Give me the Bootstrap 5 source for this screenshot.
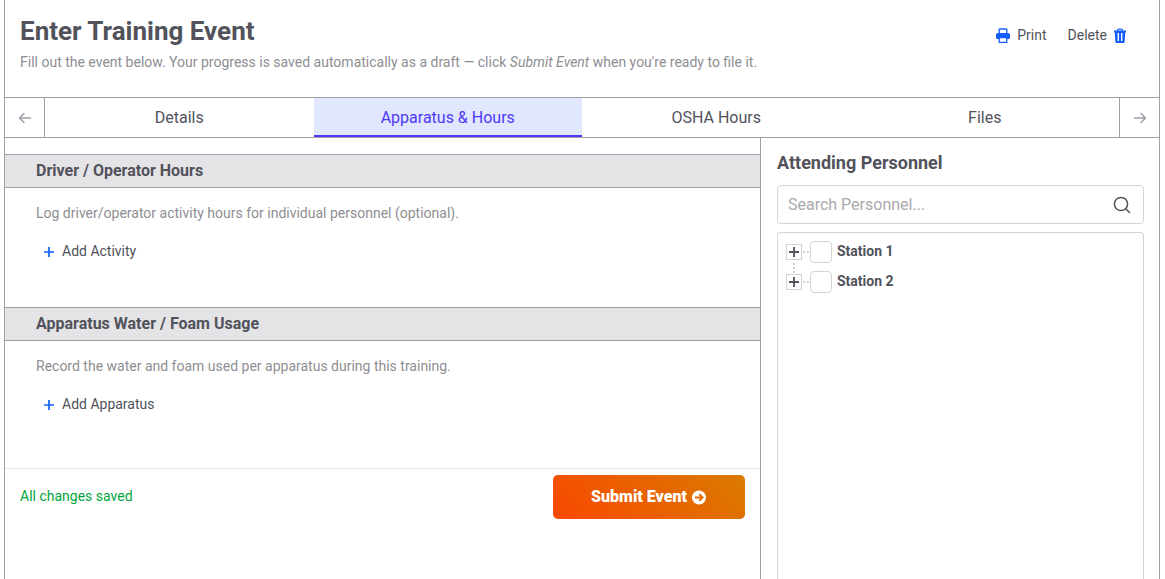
<!DOCTYPE html>
<html lang="en">
<head>
<meta charset="utf-8">
<meta name="viewport" content="width=device-width, initial-scale=1">
<title>Enter Training Event</title>
<link href="https://cdn.jsdelivr.net/npm/bootstrap@5.3.0/dist/css/bootstrap.min.css" rel="stylesheet">
<style>
  :root { --ink: #52525b; --line: #9f9fa9; --soft: #d4d4d8; --muted: #8e8e93; --blue: #155dfc; --violet: #4f39f6; }
  body { font-family: Roboto, "Liberation Sans", sans-serif; font-size: 14px; line-height: 20px; color: var(--ink); background: #fff; }
  .sheet { margin: 0 5px 0 4px; border: solid var(--line); border-width: 0 1px; }
  .sheet-head { height: 97px; padding: 15px 25px 0 15px; }
  .page-title { font-size: 26px; line-height: 32px; font-weight: 700; margin: 0 0 5px; }
  .hint { color: var(--muted); margin: 0; }
  .plain-btn { --bs-btn-font-size: 14px; --bs-btn-line-height: 20px; --bs-btn-padding-x: 8px; --bs-btn-padding-y: 6px; --bs-btn-color: var(--ink); --bs-btn-border-width: 0; --bs-btn-hover-color: var(--violet); }
  .plain-btn svg { color: var(--blue); }
  .head-actions { padding-top: 4px; gap: 5px; }
  .head-actions .plain-btn { gap: 7px; }
  .tab-row { height: 41px; border: solid var(--line); border-width: 1px 0; }
  .tab-arrow { width: 40px; border: 0 solid var(--line); background: none; color: var(--line); padding: 0 0 2px; }
  .tab-arrow.prev { border-right-width: 1px; }
  .tab-arrow.next { border-left-width: 1px; }
  .step-tabs .nav-link { --bs-nav-link-color: var(--ink); width: 100%; height: 100%; padding: 2px 0 0; font-size: 16px; line-height: 24px; background: none; border: 0; border-bottom: 2px solid transparent; border-radius: 0; }
  .step-tabs .nav-link.active { color: var(--violet); background: #e0e7ff; border-color: var(--violet); }
  .main-pane { border-right: 1px solid var(--line); padding-top: 16px; }
  .band { background: #e4e4e7; border: solid var(--line); border-width: 1px 0; font-size: 16px; line-height: 24px; font-weight: 700; padding: 4px 31px; margin: 0; }
  .band-body { height: 119px; padding: 15px 31px 0; }
  .band-body .plain-btn { margin-top: 12px; }
  .foot { border-top: 1px solid #e4e4e7; padding: 6px 15px; margin-top: 8px; }
  .saved { color: #00a63e; padding-bottom: 2px; }
  .submit-btn { width: 192px; height: 44px; border: 0; border-radius: 5px; color: #fff; font-size: 16px; font-weight: 900; background: linear-gradient(45deg, #f94800, #d97b00); }
  .side-pane { flex: 0 0 398px; padding: 13px 15px 0 16px; }
  .side-title { font-size: 18px; line-height: 24px; font-weight: 700; margin: 0 0 10px; }
  .search-box { height: 39px; border: 1px solid var(--soft); border-radius: 4px; padding-right: 11px; }
  .search-box input { font-size: 16px; padding: 0 10px; color: var(--ink); }
  .search-box input::placeholder { color: #a9a9ae; }
  .tree { margin: 8px 0 0; border: 1px solid var(--soft); border-bottom: 0; border-radius: 4px 4px 0 0; padding: 4px 8px; }
  .tree-row { height: 30px; }
  .tree-row + .tree-row .expander::before { content: ""; position: absolute; left: 6px; bottom: 16px; height: 10px; border-left: 2px dotted var(--soft); }
  .expander { width: 16px; height: 16px; padding: 0; border: 1px solid var(--soft); background: #fff; color: var(--ink); }
  .expander svg { display: block; }
  .twig { width: 6px; margin: 0 1px; border-top: 2px dotted var(--soft); }
  .tree-row .form-check-input { width: 22px; height: 22px; margin: 0; border: 1px solid var(--soft); border-radius: 4px; }
  .tree-row label { font-weight: 700; margin-left: 5px; padding-bottom: 2px; }
</style>
</head>
<body>
<div class="sheet min-vh-100 d-flex flex-column">
  <header class="sheet-head d-flex justify-content-between align-items-start">
    <div>
      <h1 class="page-title">Enter Training Event</h1>
      <p class="hint">Fill out the event below. Your progress is saved automatically as a draft — click <em>Submit Event</em> when you're ready to file it.</p>
    </div>
    <div class="head-actions d-flex">
      <button type="button" class="btn plain-btn d-flex align-items-center">
        <svg width="14" height="16" viewBox="0 0 14 16" aria-hidden="true"><path d="M3.2 6V2.600Q3.200 2 3.800 2H10.200Q10.800 2 10.800 2.600V6" fill="none" stroke="currentColor" stroke-width="1.300"/><path d="M2 6H12Q14 6 14 8V11Q14 12 13 12H1Q0 12 0 11V8Q0 6 2 6Z" fill="currentColor"/><path d="M3.300 10.500H10.700V15.300H3.300Z" fill="#fff" stroke="currentColor" stroke-width="1.300"/></svg>
        <span>Print</span>
      </button>
      <button type="button" class="btn plain-btn d-flex align-items-center">
        <span>Delete</span>
        <svg width="12" height="16" viewBox="0 0 12 16" aria-hidden="true"><path d="M3.500 4Q3.500 2.200 5 2.200H7Q8.500 2.200 8.500 4" fill="none" stroke="currentColor" stroke-width="1.300"/><path d="M0 3.500H12V5.200H11.300L10.600 15Q10.500 16 9.500 16H2.500Q1.500 16 1.400 15L0.700 5.200H0Z" fill="currentColor"/><path d="M4.300 6V14M7.700 6V14" stroke="#fff" stroke-width="1.400"/></svg>
      </button>
    </div>
  </header>

  <nav class="tab-row d-flex" aria-label="Event sections">
    <button type="button" class="tab-arrow prev" aria-label="Previous section"><svg width="14" height="14" viewBox="0 0 14 14" fill="none" stroke="currentColor" stroke-width="1.500" stroke-linecap="round" stroke-linejoin="round"><path d="M12.500 7H1.500M6 2.500 1.500 7 6 11.500"/></svg></button>
    <div class="step-tabs nav nav-fill nav-justified flex-nowrap flex-grow-1">
      <div class="nav-item"><button type="button" class="nav-link">Details</button></div>
      <div class="nav-item"><button type="button" class="nav-link active" aria-current="true">Apparatus &amp; Hours</button></div>
      <div class="nav-item"><button type="button" class="nav-link">OSHA Hours</button></div>
      <div class="nav-item"><button type="button" class="nav-link">Files</button></div>
    </div>
    <button type="button" class="tab-arrow next" aria-label="Next section"><svg width="14" height="14" viewBox="0 0 14 14" fill="none" stroke="currentColor" stroke-width="1.500" stroke-linecap="round" stroke-linejoin="round"><path d="M1.500 7H12.500M8 2.500 12.500 7 8 11.500"/></svg></button>
  </nav>

  <div class="d-flex flex-grow-1">
    <main class="main-pane flex-grow-1">
      <section>
        <h2 class="band">Driver / Operator Hours</h2>
        <div class="band-body">
          <p class="hint">Log driver/operator activity hours for individual personnel (optional).</p>
          <button type="button" class="btn plain-btn d-flex align-items-center gap-2"><svg width="10" height="12" viewBox="0 0 10 12" aria-hidden="true"><path d="M5 2V12M0 7H10" stroke="currentColor" stroke-width="1.700"/></svg>Add Activity</button>
        </div>
      </section>
      <section>
        <h2 class="band">Apparatus Water / Foam Usage</h2>
        <div class="band-body">
          <p class="hint">Record the water and foam used per apparatus during this training.</p>
          <button type="button" class="btn plain-btn d-flex align-items-center gap-2"><svg width="10" height="12" viewBox="0 0 10 12" aria-hidden="true"><path d="M5 2V12M0 7H10" stroke="currentColor" stroke-width="1.700"/></svg>Add Apparatus</button>
        </div>
      </section>
      <footer class="foot d-flex justify-content-between align-items-center">
        <span class="saved">All changes saved</span>
        <button type="submit" class="submit-btn d-flex align-items-center justify-content-center">Submit Event<svg class="ms-1" width="16" height="16" viewBox="0 0 16 16" aria-hidden="true"><circle cx="8" cy="8.500" r="7" fill="#fff"/><path d="M4 8.500H11.500M8.300 5.100 11.700 8.500 8.300 11.900" fill="none" stroke="#e66800" stroke-width="1.800"/></svg></button>
      </footer>
    </main>

    <aside class="side-pane d-flex flex-column">
      <h2 class="side-title">Attending Personnel</h2>
      <div class="search-box d-flex align-items-center">
        <input type="search" class="form-control border-0 bg-transparent shadow-none" placeholder="Search Personnel..." aria-label="Search Personnel">
        <svg class="flex-shrink-0" width="20" height="20" viewBox="0 0 20 20" fill="none" stroke="currentColor" stroke-width="1.500" stroke-linecap="round" aria-hidden="true"><circle cx="9" cy="9" r="6.600"/><path d="M13.800 13.800 17.500 17.500"/></svg>
      </div>
      <div class="tree flex-grow-1">
        <div class="tree-row d-flex align-items-center">
          <button type="button" class="expander position-relative" aria-label="Expand Station 1"><svg width="14" height="14" viewBox="0 0 14 14"><path d="M7 2V12M2 7H12" stroke="currentColor" stroke-width="1.800"/></svg></button>
          <span class="twig"></span>
          <input class="form-check-input" type="checkbox" id="station1">
          <label for="station1">Station 1</label>
        </div>
        <div class="tree-row d-flex align-items-center">
          <button type="button" class="expander position-relative" aria-label="Expand Station 2"><svg width="14" height="14" viewBox="0 0 14 14"><path d="M7 2V12M2 7H12" stroke="currentColor" stroke-width="1.800"/></svg></button>
          <span class="twig"></span>
          <input class="form-check-input" type="checkbox" id="station2">
          <label for="station2">Station 2</label>
        </div>
      </div>
    </aside>
  </div>
</div>
<script src="https://cdn.jsdelivr.net/npm/bootstrap@5.3.0/dist/js/bootstrap.bundle.min.js"></script>
</body>
</html>
